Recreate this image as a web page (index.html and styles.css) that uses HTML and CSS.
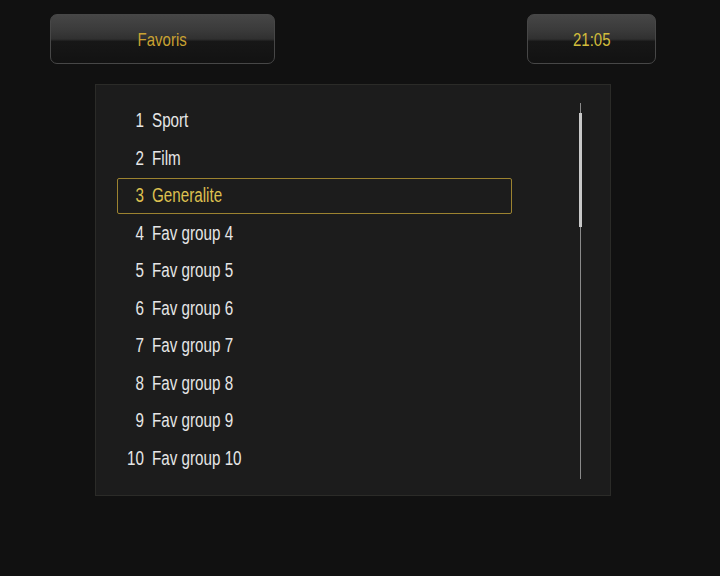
FILE: index.html
```html
<!DOCTYPE html>
<html>
<head>
<meta charset="utf-8">
<link rel="stylesheet" href="styles.css">
</head>
<body>
<div class="screen">
  <header class="topbar">
    <div class="pill pill-title"><span class="txt">Favoris</span></div>
    <div class="pill pill-clock"><span class="txt">21:05</span></div>
  </header>
  <main class="panel">
    <ul class="list">
      <li class="row"><span class="num">1</span><span class="name">Sport</span></li>
      <li class="row"><span class="num">2</span><span class="name">Film</span></li>
      <li class="row selected"><span class="num">3</span><span class="name">Generalite</span></li>
      <li class="row"><span class="num">4</span><span class="name">Fav group 4</span></li>
      <li class="row"><span class="num">5</span><span class="name">Fav group 5</span></li>
      <li class="row"><span class="num">6</span><span class="name">Fav group 6</span></li>
      <li class="row"><span class="num">7</span><span class="name">Fav group 7</span></li>
      <li class="row"><span class="num">8</span><span class="name">Fav group 8</span></li>
      <li class="row"><span class="num">9</span><span class="name">Fav group 9</span></li>
      <li class="row"><span class="num">10</span><span class="name">Fav group 10</span></li>
    </ul>
    <div class="scroll"><div class="thumb"></div></div>
  </main>
</div>
</body>
</html>
```
FILE: styles.css
```css
html, body {
  margin: 0;
  padding: 0;
  background: #111111;
}
.screen {
  width: 720px;
  height: 576px;
  background: #111111;
  font-family: "Liberation Sans", Arial, sans-serif;
  overflow: hidden;
}
.topbar {
  display: flex;
  justify-content: space-between;
  padding: 14px 64px 0 50px;
}
.pill {
  height: 50px;
  box-sizing: border-box;
  border: 1px solid #474747;
  border-radius: 7px;
  background: linear-gradient(to bottom, #464646 0%, #3b3b3b 30%, #303030 50%, #171717 55%, #121212 100%);
  display: flex;
  align-items: center;
  justify-content: center;
  font-size: 19px;
  padding-top: 1px;
}
.txt {
  display: inline-block;
  transform: scaleX(0.79);
}
.pill-title {
  width: 225px;
  color: #c9a232;
}
.pill-clock {
  width: 129px;
  color: #d2bd3c;
}
.panel {
  margin: 20px 0 0 95px;
  width: 516px;
  height: 412px;
  box-sizing: border-box;
  background: #1c1c1c;
  border: 1px solid #2b2b28;
  display: flex;
  padding: 17px 0 0 21px;
}
.list {
  list-style: none;
  margin: 0;
  padding: 0;
  width: 395px;
}
.row {
  height: 37.5px;
  box-sizing: border-box;
  display: flex;
  align-items: center;
  color: #e6e6e6;
  font-size: 20px;
  border: 1px solid transparent;
  border-radius: 2px;
}
.row.selected {
  border-color: #9c8330;
  color: #dcc050;
  height: 36px;
  margin: 0.75px 0;
}
.num {
  display: inline-block;
  width: 26px;
  text-align: right;
  transform: scaleX(0.76);
  transform-origin: right center;
}
.name {
  display: inline-block;
  margin-left: 8px;
  transform: scaleX(0.76);
  transform-origin: left center;
  white-space: nowrap;
}
.scroll {
  margin: 1px 0 0 67px;
  width: 3px;
  height: 376px;
  position: relative;
  display: flex;
  justify-content: center;
}
.scroll::before {
  content: "";
  width: 1px;
  height: 100%;
  background: #8a8a8a;
}
.thumb {
  position: absolute;
  left: 0;
  top: 10px;
  width: 3px;
  height: 114px;
  background: #c8c8c8;
}
```
